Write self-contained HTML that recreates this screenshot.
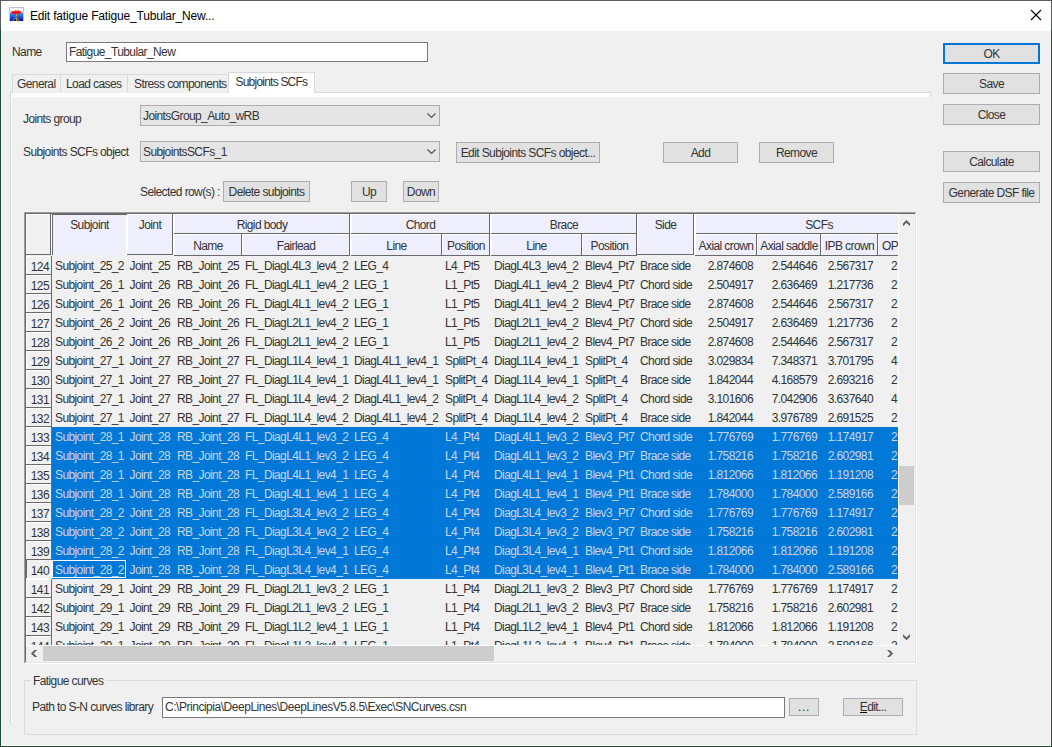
<!DOCTYPE html><html><head><meta charset="utf-8"><style>
*{margin:0;padding:0}
html,body{width:1052px;height:747px;overflow:hidden;background:#f0f0f0}
body{position:relative}
div,span,svg{position:absolute}
.t{white-space:pre;font-family:"Liberation Sans",sans-serif;font-size:12px;letter-spacing:-0.6px;line-height:14px;color:#333}
.w{color:#c8d6e4}
</style></head><body>
<div style="left:0px;top:0px;width:1052px;height:747px;background:#ffffff"></div>
<div style="left:2px;top:31px;width:1048px;height:714px;background:#f0f0f0"></div>
<div style="left:0px;top:0px;width:1052px;height:1px;background:#5b5f62"></div>
<div style="left:0px;top:1px;width:1px;height:29px;background:#555b5e"></div>
<div style="left:1051px;top:1px;width:1px;height:29px;background:#555b5e"></div>
<div style="left:0px;top:30px;width:1px;height:717px;background:#1d4a33"></div>
<div style="left:1051px;top:30px;width:1px;height:717px;background:#1d4a33"></div>
<div style="left:0px;top:746px;width:1052px;height:1px;background:#1d4a33"></div>
<svg style="left:9px;top:7px" width="15" height="15" viewBox="0 0 15 15">
<defs><linearGradient id="g" x1="0" y1="0" x2="0" y2="1"><stop offset="0" stop-color="#4a9aff"/><stop offset="0.5" stop-color="#1f5ae0"/><stop offset="1" stop-color="#0008a8"/></linearGradient></defs>
<rect x="0" y="0" width="15" height="15" fill="#f4f4f8"/>
<rect x="0" y="0" width="15" height="1" fill="#b8bce4"/>
<rect x="0" y="0" width="1" height="14" fill="#c0c4e8"/>
<rect x="14" y="0" width="1" height="14" fill="#c0c4e8"/>
<rect x="1" y="5.5" width="13" height="8.5" fill="url(#g)"/>
<path d="M2 4.3 L6 4.3 L6.5 3.3 L7.3 3.3 L7.5 4.3 L8.5 4.3 L8.7 3.3 L9.5 3.3 L10 4.6 L12.3 4.3 L12 6 L11 6.8 L3.2 6.8 Z" fill="#ff0000"/>
<path d="M7.5 7 L7.5 9 L6.5 10 L7.5 11 L7.5 14 M7.5 11 L10.5 14 M6.5 11 L3.5 14" stroke="#d8b020" stroke-width="0.9" fill="none"/>
</svg>
<span class="t" style="left:30px;top:9px;font-size:12px;letter-spacing:-0.17px;color:#000">Edit fatigue Fatigue_Tubular_New...</span>
<svg style="left:1030px;top:9px" width="12" height="12" viewBox="0 0 12 12"><path d="M1 1 L11 11 M11 1 L1 11" stroke="#000" stroke-width="1.1"/></svg>
<span class="t" style="left:12px;top:45px;">Name</span>
<div style="left:66px;top:42px;width:362px;height:20px;background:#fff;border:1px solid #7a7a7a;box-sizing:border-box"></div>
<span class="t" style="left:69px;top:45px;">Fatigue_Tubular_New</span>
<div style="left:10px;top:92px;width:921px;height:632px;background:#fff;border:1px solid #d9d9d9;box-sizing:border-box"></div>
<div style="left:12px;top:97px;width:1038px;height:648px;background:#f0f0f0"></div>
<div style="left:12px;top:74px;width:217px;height:19px;background:#f0f0f0;border:1px solid #d9d9d9;border-bottom:none;box-sizing:border-box"></div>
<div style="left:60px;top:74px;width:1px;height:18px;background:#d9d9d9"></div>
<div style="left:127px;top:74px;width:1px;height:18px;background:#d9d9d9"></div>
<span class="t" style="left:17px;top:77px;">General</span>
<span class="t" style="left:66px;top:77px;">Load cases</span>
<span class="t" style="left:134px;top:77px;">Stress components</span>
<div style="left:228px;top:72px;width:87px;height:21px;background:#fff;border:1px solid #d9d9d9;border-bottom:none;box-sizing:border-box"></div>
<div style="left:229px;top:92px;width:85px;height:5px;background:#fff"></div>
<span class="t" style="left:235.5px;top:75px;letter-spacing:-0.78px">Subjoints SCFs</span>
<span class="t" style="left:23px;top:112px;">Joints group</span>
<div style="left:140px;top:105px;width:300px;height:21px;background:#e5e5e5;border:1px solid #adadad;box-sizing:border-box"></div>
<span class="t" style="left:143px;top:109px;">JointsGroup_Auto_wRB</span>
<svg style="left:426px;top:112px" width="11" height="8" viewBox="0 0 11 8"><path d="M1.5 1.5 L5.5 5.5 L9.5 1.5" stroke="#555" stroke-width="1.2" fill="none"/></svg>
<span class="t" style="left:23px;top:145px;">Subjoints SCFs object</span>
<div style="left:140px;top:141px;width:300px;height:21px;background:#e5e5e5;border:1px solid #adadad;box-sizing:border-box"></div>
<span class="t" style="left:143px;top:145px;">SubjointsSCFs_1</span>
<svg style="left:426px;top:148px" width="11" height="8" viewBox="0 0 11 8"><path d="M1.5 1.5 L5.5 5.5 L9.5 1.5" stroke="#555" stroke-width="1.2" fill="none"/></svg>
<div style="left:456px;top:142px;width:144px;height:21px;background:#e1e1e1;border:1px solid #adadad;box-sizing:border-box"></div>
<span class="t" style="left:456px;top:146px;width:144px;text-align:center;">Edit Subjoints SCFs object...</span>
<div style="left:663px;top:142px;width:75px;height:21px;background:#e1e1e1;border:1px solid #adadad;box-sizing:border-box"></div>
<span class="t" style="left:663px;top:146px;width:75px;text-align:center;">Add</span>
<div style="left:759px;top:142px;width:75px;height:21px;background:#e1e1e1;border:1px solid #adadad;box-sizing:border-box"></div>
<span class="t" style="left:759px;top:146px;width:75px;text-align:center;">Remove</span>
<span class="t" style="left:140px;top:185px;">Selected row(s) :</span>
<div style="left:223px;top:181px;width:87px;height:21px;background:#e1e1e1;border:1px solid #adadad;box-sizing:border-box"></div>
<span class="t" style="left:223px;top:185px;width:87px;text-align:center;">Delete subjoints</span>
<div style="left:351px;top:181px;width:36px;height:21px;background:#e1e1e1;border:1px solid #adadad;box-sizing:border-box"></div>
<span class="t" style="left:351px;top:185px;width:36px;text-align:center;">Up</span>
<div style="left:403px;top:181px;width:36px;height:21px;background:#e1e1e1;border:1px solid #adadad;box-sizing:border-box"></div>
<span class="t" style="left:403px;top:185px;width:36px;text-align:center;">Down</span>
<div style="left:943px;top:43px;width:97px;height:21px;background:#e1e1e1;border:2px solid #0078d7;box-sizing:border-box"></div>
<span class="t" style="left:943px;top:47px;width:97px;text-align:center;">OK</span>
<div style="left:943px;top:73px;width:97px;height:21px;background:#e1e1e1;border:1px solid #adadad;box-sizing:border-box"></div>
<span class="t" style="left:943px;top:77px;width:97px;text-align:center;">Save</span>
<div style="left:943px;top:104px;width:97px;height:21px;background:#e1e1e1;border:1px solid #adadad;box-sizing:border-box"></div>
<span class="t" style="left:943px;top:108px;width:97px;text-align:center;">Close</span>
<div style="left:943px;top:151px;width:97px;height:21px;background:#e1e1e1;border:1px solid #adadad;box-sizing:border-box"></div>
<span class="t" style="left:943px;top:155px;width:97px;text-align:center;">Calculate</span>
<div style="left:943px;top:182px;width:97px;height:21px;background:#e1e1e1;border:1px solid #adadad;box-sizing:border-box"></div>
<span class="t" style="left:943px;top:186px;width:97px;text-align:center;">Generate DSF file</span>
<div style="left:24px;top:212px;width:893px;height:452px;background:#ffffff"></div>
<div style="left:24px;top:212px;width:892px;height:1px;background:#a0a0a0"></div>
<div style="left:24px;top:212px;width:1px;height:451px;background:#a0a0a0"></div>
<div style="left:25px;top:213px;width:890px;height:1px;background:#696969"></div>
<div style="left:25px;top:213px;width:1px;height:449px;background:#696969"></div>
<div style="left:25px;top:662px;width:891px;height:1px;background:#e3e3e3"></div>
<div style="left:915px;top:213px;width:1px;height:450px;background:#e3e3e3"></div>
<div style="left:26px;top:214px;width:872px;height:431px;overflow:hidden;background:#f0f0f0">
<div style="left:0px;top:0px;width:872px;height:41px;background:#ffffff"></div>
<div style="left:1px;top:1px;width:23px;height:39px;background:#f0f0f0"></div>
<div style="left:24px;top:0px;width:1px;height:41px;background:#696969"></div>
<div style="left:0px;top:40px;width:25px;height:1px;background:#696969"></div>
<div style="left:26px;top:0px;width:1px;height:41px;background:#696969"></div>
<div style="left:26px;top:0px;width:75px;height:1px;background:#696969"></div>
<div style="left:27px;top:1px;width:73px;height:40px;background:#eeeefc"></div>
<span class="t" style="left:27px;top:4px;width:73px;text-align:center;">Subjoint</span>
<div style="left:102px;top:1px;width:44px;height:39px;background:#eeeefc"></div>
<div style="left:146px;top:0px;width:1px;height:41px;background:#696969"></div>
<div style="left:101px;top:40px;width:46px;height:1px;background:#696969"></div>
<span class="t" style="left:102px;top:4px;width:44px;text-align:center;">Joint</span>
<div style="left:149px;top:1px;width:174px;height:18px;background:#eeeefc"></div>
<div style="left:323px;top:0px;width:1px;height:20px;background:#696969"></div>
<div style="left:148px;top:19px;width:176px;height:1px;background:#696969"></div>
<span class="t" style="left:149px;top:4px;width:174px;text-align:center;">Rigid body</span>
<div style="left:149px;top:21px;width:66px;height:20px;background:#eeeefc"></div>
<div style="left:215px;top:20px;width:1px;height:22px;background:#696969"></div>
<div style="left:148px;top:41px;width:68px;height:1px;background:#696969"></div>
<span class="t" style="left:149px;top:25px;width:66px;text-align:center;">Name</span>
<div style="left:217px;top:21px;width:106px;height:20px;background:#eeeefc"></div>
<div style="left:323px;top:20px;width:1px;height:22px;background:#696969"></div>
<div style="left:216px;top:41px;width:108px;height:1px;background:#696969"></div>
<span class="t" style="left:217px;top:25px;width:106px;text-align:center;">Fairlead</span>
<div style="left:326px;top:1px;width:137px;height:18px;background:#eeeefc"></div>
<div style="left:463px;top:0px;width:1px;height:20px;background:#696969"></div>
<div style="left:325px;top:19px;width:139px;height:1px;background:#696969"></div>
<span class="t" style="left:326px;top:4px;width:137px;text-align:center;">Chord</span>
<div style="left:326px;top:21px;width:89px;height:20px;background:#eeeefc"></div>
<div style="left:415px;top:20px;width:1px;height:22px;background:#696969"></div>
<div style="left:325px;top:41px;width:91px;height:1px;background:#696969"></div>
<span class="t" style="left:326px;top:25px;width:89px;text-align:center;">Line</span>
<div style="left:417px;top:21px;width:46px;height:20px;background:#eeeefc"></div>
<div style="left:463px;top:20px;width:1px;height:22px;background:#696969"></div>
<div style="left:416px;top:41px;width:48px;height:1px;background:#696969"></div>
<span class="t" style="left:417px;top:25px;width:46px;text-align:center;">Position</span>
<div style="left:466px;top:1px;width:144px;height:18px;background:#eeeefc"></div>
<div style="left:610px;top:0px;width:1px;height:20px;background:#696969"></div>
<div style="left:465px;top:19px;width:146px;height:1px;background:#696969"></div>
<span class="t" style="left:466px;top:4px;width:144px;text-align:center;">Brace</span>
<div style="left:466px;top:21px;width:89px;height:20px;background:#eeeefc"></div>
<div style="left:555px;top:20px;width:1px;height:22px;background:#696969"></div>
<div style="left:465px;top:41px;width:91px;height:1px;background:#696969"></div>
<span class="t" style="left:466px;top:25px;width:89px;text-align:center;">Line</span>
<div style="left:557px;top:21px;width:53px;height:20px;background:#eeeefc"></div>
<div style="left:610px;top:20px;width:1px;height:22px;background:#696969"></div>
<div style="left:556px;top:41px;width:55px;height:1px;background:#696969"></div>
<span class="t" style="left:557px;top:25px;width:53px;text-align:center;">Position</span>
<div style="left:612px;top:1px;width:55px;height:39px;background:#eeeefc"></div>
<div style="left:667px;top:0px;width:1px;height:41px;background:#696969"></div>
<div style="left:611px;top:40px;width:57px;height:1px;background:#696969"></div>
<span class="t" style="left:612px;top:4px;width:55px;text-align:center;">Side</span>
<div style="left:670px;top:1px;width:202px;height:18px;background:#eeeefc"></div>
<div style="left:670px;top:19px;width:202px;height:1px;background:#696969"></div>
<span class="t" style="left:670px;top:4px;width:246px;text-align:center;">SCFs</span>
<div style="left:670px;top:21px;width:60px;height:20px;background:#eeeefc"></div>
<div style="left:730px;top:20px;width:1px;height:22px;background:#696969"></div>
<div style="left:669px;top:41px;width:62px;height:1px;background:#696969"></div>
<span class="t" style="left:670px;top:25px;width:60px;text-align:center;">Axial crown</span>
<div style="left:732px;top:21px;width:62px;height:20px;background:#eeeefc"></div>
<div style="left:794px;top:20px;width:1px;height:22px;background:#696969"></div>
<div style="left:731px;top:41px;width:64px;height:1px;background:#696969"></div>
<span class="t" style="left:732px;top:25px;width:62px;text-align:center;">Axial saddle</span>
<div style="left:796px;top:21px;width:55px;height:20px;background:#eeeefc"></div>
<div style="left:851px;top:20px;width:1px;height:22px;background:#696969"></div>
<div style="left:795px;top:41px;width:57px;height:1px;background:#696969"></div>
<span class="t" style="left:796px;top:25px;width:55px;text-align:center;">IPB crown</span>
<div style="left:853px;top:21px;width:19px;height:20px;background:#eeeefc"></div>
<div style="left:852px;top:41px;width:20px;height:1px;background:#696969"></div>
<span class="t" style="left:856px;top:25px;">OP</span>
<div style="left:0px;top:42px;width:25px;height:18px;background:#ffffff"></div>
<div style="left:1px;top:43px;width:24px;height:17px;background:#f0f0f0"></div>
<div style="left:25px;top:42px;width:1px;height:19px;background:#696969"></div>
<div style="left:0px;top:60px;width:26px;height:1px;background:#696969"></div>
<span class="t" style="left:-177px;top:46px;width:200px;text-align:right;">124</span>
<span class="t" style="left:29px;top:45px;">Subjoint_25_2</span>
<span class="t" style="left:103.5px;top:45px;">Joint_25</span>
<span class="t" style="left:151px;top:45px;">RB_Joint_25</span>
<span class="t" style="left:219px;top:45px;">FL_DiagL4L3_lev4_2</span>
<span class="t" style="left:328px;top:45px;">LEG_4</span>
<span class="t" style="left:419px;top:45px;">L4_Pt5</span>
<span class="t" style="left:468px;top:45px;">DiagL4L3_lev4_2</span>
<span class="t" style="left:559px;top:45px;">Blev4_Pt7</span>
<span class="t" style="left:614px;top:45px;">Brace side</span>
<span class="t" style="left:527px;top:45px;width:200px;text-align:right;">2.874608</span>
<span class="t" style="left:591px;top:45px;width:200px;text-align:right;">2.544646</span>
<span class="t" style="left:647px;top:45px;width:200px;text-align:right;">2.567317</span>
<span class="t" style="left:865px;top:45px;">2</span>
<div style="left:0px;top:61px;width:25px;height:18px;background:#ffffff"></div>
<div style="left:1px;top:62px;width:24px;height:17px;background:#f0f0f0"></div>
<div style="left:25px;top:61px;width:1px;height:19px;background:#696969"></div>
<div style="left:0px;top:79px;width:26px;height:1px;background:#696969"></div>
<span class="t" style="left:-177px;top:65px;width:200px;text-align:right;">125</span>
<span class="t" style="left:29px;top:64px;">Subjoint_26_1</span>
<span class="t" style="left:103.5px;top:64px;">Joint_26</span>
<span class="t" style="left:151px;top:64px;">RB_Joint_26</span>
<span class="t" style="left:219px;top:64px;">FL_DiagL4L1_lev4_2</span>
<span class="t" style="left:328px;top:64px;">LEG_1</span>
<span class="t" style="left:419px;top:64px;">L1_Pt5</span>
<span class="t" style="left:468px;top:64px;">DiagL4L1_lev4_2</span>
<span class="t" style="left:559px;top:64px;">Blev4_Pt7</span>
<span class="t" style="left:614px;top:64px;">Chord side</span>
<span class="t" style="left:527px;top:64px;width:200px;text-align:right;">2.504917</span>
<span class="t" style="left:591px;top:64px;width:200px;text-align:right;">2.636469</span>
<span class="t" style="left:647px;top:64px;width:200px;text-align:right;">1.217736</span>
<span class="t" style="left:865px;top:64px;">2</span>
<div style="left:0px;top:80px;width:25px;height:18px;background:#ffffff"></div>
<div style="left:1px;top:81px;width:24px;height:17px;background:#f0f0f0"></div>
<div style="left:25px;top:80px;width:1px;height:19px;background:#696969"></div>
<div style="left:0px;top:98px;width:26px;height:1px;background:#696969"></div>
<span class="t" style="left:-177px;top:84px;width:200px;text-align:right;">126</span>
<span class="t" style="left:29px;top:83px;">Subjoint_26_1</span>
<span class="t" style="left:103.5px;top:83px;">Joint_26</span>
<span class="t" style="left:151px;top:83px;">RB_Joint_26</span>
<span class="t" style="left:219px;top:83px;">FL_DiagL4L1_lev4_2</span>
<span class="t" style="left:328px;top:83px;">LEG_1</span>
<span class="t" style="left:419px;top:83px;">L1_Pt5</span>
<span class="t" style="left:468px;top:83px;">DiagL4L1_lev4_2</span>
<span class="t" style="left:559px;top:83px;">Blev4_Pt7</span>
<span class="t" style="left:614px;top:83px;">Brace side</span>
<span class="t" style="left:527px;top:83px;width:200px;text-align:right;">2.874608</span>
<span class="t" style="left:591px;top:83px;width:200px;text-align:right;">2.544646</span>
<span class="t" style="left:647px;top:83px;width:200px;text-align:right;">2.567317</span>
<span class="t" style="left:865px;top:83px;">2</span>
<div style="left:0px;top:99px;width:25px;height:18px;background:#ffffff"></div>
<div style="left:1px;top:100px;width:24px;height:17px;background:#f0f0f0"></div>
<div style="left:25px;top:99px;width:1px;height:19px;background:#696969"></div>
<div style="left:0px;top:117px;width:26px;height:1px;background:#696969"></div>
<span class="t" style="left:-177px;top:103px;width:200px;text-align:right;">127</span>
<span class="t" style="left:29px;top:102px;">Subjoint_26_2</span>
<span class="t" style="left:103.5px;top:102px;">Joint_26</span>
<span class="t" style="left:151px;top:102px;">RB_Joint_26</span>
<span class="t" style="left:219px;top:102px;">FL_DiagL2L1_lev4_2</span>
<span class="t" style="left:328px;top:102px;">LEG_1</span>
<span class="t" style="left:419px;top:102px;">L1_Pt5</span>
<span class="t" style="left:468px;top:102px;">DiagL2L1_lev4_2</span>
<span class="t" style="left:559px;top:102px;">Blev4_Pt7</span>
<span class="t" style="left:614px;top:102px;">Chord side</span>
<span class="t" style="left:527px;top:102px;width:200px;text-align:right;">2.504917</span>
<span class="t" style="left:591px;top:102px;width:200px;text-align:right;">2.636469</span>
<span class="t" style="left:647px;top:102px;width:200px;text-align:right;">1.217736</span>
<span class="t" style="left:865px;top:102px;">2</span>
<div style="left:0px;top:118px;width:25px;height:18px;background:#ffffff"></div>
<div style="left:1px;top:119px;width:24px;height:17px;background:#f0f0f0"></div>
<div style="left:25px;top:118px;width:1px;height:19px;background:#696969"></div>
<div style="left:0px;top:136px;width:26px;height:1px;background:#696969"></div>
<span class="t" style="left:-177px;top:122px;width:200px;text-align:right;">128</span>
<span class="t" style="left:29px;top:121px;">Subjoint_26_2</span>
<span class="t" style="left:103.5px;top:121px;">Joint_26</span>
<span class="t" style="left:151px;top:121px;">RB_Joint_26</span>
<span class="t" style="left:219px;top:121px;">FL_DiagL2L1_lev4_2</span>
<span class="t" style="left:328px;top:121px;">LEG_1</span>
<span class="t" style="left:419px;top:121px;">L1_Pt5</span>
<span class="t" style="left:468px;top:121px;">DiagL2L1_lev4_2</span>
<span class="t" style="left:559px;top:121px;">Blev4_Pt7</span>
<span class="t" style="left:614px;top:121px;">Brace side</span>
<span class="t" style="left:527px;top:121px;width:200px;text-align:right;">2.874608</span>
<span class="t" style="left:591px;top:121px;width:200px;text-align:right;">2.544646</span>
<span class="t" style="left:647px;top:121px;width:200px;text-align:right;">2.567317</span>
<span class="t" style="left:865px;top:121px;">2</span>
<div style="left:0px;top:137px;width:25px;height:18px;background:#ffffff"></div>
<div style="left:1px;top:138px;width:24px;height:17px;background:#f0f0f0"></div>
<div style="left:25px;top:137px;width:1px;height:19px;background:#696969"></div>
<div style="left:0px;top:155px;width:26px;height:1px;background:#696969"></div>
<span class="t" style="left:-177px;top:141px;width:200px;text-align:right;">129</span>
<span class="t" style="left:29px;top:140px;">Subjoint_27_1</span>
<span class="t" style="left:103.5px;top:140px;">Joint_27</span>
<span class="t" style="left:151px;top:140px;">RB_Joint_27</span>
<span class="t" style="left:219px;top:140px;">FL_DiagL1L4_lev4_1</span>
<span class="t" style="left:328px;top:140px;">DiagL4L1_lev4_1</span>
<span class="t" style="left:419px;top:140px;">SplitPt_4</span>
<span class="t" style="left:468px;top:140px;">DiagL1L4_lev4_1</span>
<span class="t" style="left:559px;top:140px;">SplitPt_4</span>
<span class="t" style="left:614px;top:140px;">Chord side</span>
<span class="t" style="left:527px;top:140px;width:200px;text-align:right;">3.029834</span>
<span class="t" style="left:591px;top:140px;width:200px;text-align:right;">7.348371</span>
<span class="t" style="left:647px;top:140px;width:200px;text-align:right;">3.701795</span>
<span class="t" style="left:865px;top:140px;">4</span>
<div style="left:0px;top:156px;width:25px;height:18px;background:#ffffff"></div>
<div style="left:1px;top:157px;width:24px;height:17px;background:#f0f0f0"></div>
<div style="left:25px;top:156px;width:1px;height:19px;background:#696969"></div>
<div style="left:0px;top:174px;width:26px;height:1px;background:#696969"></div>
<span class="t" style="left:-177px;top:160px;width:200px;text-align:right;">130</span>
<span class="t" style="left:29px;top:159px;">Subjoint_27_1</span>
<span class="t" style="left:103.5px;top:159px;">Joint_27</span>
<span class="t" style="left:151px;top:159px;">RB_Joint_27</span>
<span class="t" style="left:219px;top:159px;">FL_DiagL1L4_lev4_1</span>
<span class="t" style="left:328px;top:159px;">DiagL4L1_lev4_1</span>
<span class="t" style="left:419px;top:159px;">SplitPt_4</span>
<span class="t" style="left:468px;top:159px;">DiagL1L4_lev4_1</span>
<span class="t" style="left:559px;top:159px;">SplitPt_4</span>
<span class="t" style="left:614px;top:159px;">Brace side</span>
<span class="t" style="left:527px;top:159px;width:200px;text-align:right;">1.842044</span>
<span class="t" style="left:591px;top:159px;width:200px;text-align:right;">4.168579</span>
<span class="t" style="left:647px;top:159px;width:200px;text-align:right;">2.693216</span>
<span class="t" style="left:865px;top:159px;">2</span>
<div style="left:0px;top:175px;width:25px;height:18px;background:#ffffff"></div>
<div style="left:1px;top:176px;width:24px;height:17px;background:#f0f0f0"></div>
<div style="left:25px;top:175px;width:1px;height:19px;background:#696969"></div>
<div style="left:0px;top:193px;width:26px;height:1px;background:#696969"></div>
<span class="t" style="left:-177px;top:179px;width:200px;text-align:right;">131</span>
<span class="t" style="left:29px;top:178px;">Subjoint_27_1</span>
<span class="t" style="left:103.5px;top:178px;">Joint_27</span>
<span class="t" style="left:151px;top:178px;">RB_Joint_27</span>
<span class="t" style="left:219px;top:178px;">FL_DiagL1L4_lev4_2</span>
<span class="t" style="left:328px;top:178px;">DiagL4L1_lev4_2</span>
<span class="t" style="left:419px;top:178px;">SplitPt_4</span>
<span class="t" style="left:468px;top:178px;">DiagL1L4_lev4_2</span>
<span class="t" style="left:559px;top:178px;">SplitPt_4</span>
<span class="t" style="left:614px;top:178px;">Chord side</span>
<span class="t" style="left:527px;top:178px;width:200px;text-align:right;">3.101606</span>
<span class="t" style="left:591px;top:178px;width:200px;text-align:right;">7.042906</span>
<span class="t" style="left:647px;top:178px;width:200px;text-align:right;">3.637640</span>
<span class="t" style="left:865px;top:178px;">4</span>
<div style="left:0px;top:194px;width:25px;height:18px;background:#ffffff"></div>
<div style="left:1px;top:195px;width:24px;height:17px;background:#f0f0f0"></div>
<div style="left:25px;top:194px;width:1px;height:19px;background:#696969"></div>
<div style="left:0px;top:212px;width:26px;height:1px;background:#696969"></div>
<span class="t" style="left:-177px;top:198px;width:200px;text-align:right;">132</span>
<span class="t" style="left:29px;top:197px;">Subjoint_27_1</span>
<span class="t" style="left:103.5px;top:197px;">Joint_27</span>
<span class="t" style="left:151px;top:197px;">RB_Joint_27</span>
<span class="t" style="left:219px;top:197px;">FL_DiagL1L4_lev4_2</span>
<span class="t" style="left:328px;top:197px;">DiagL4L1_lev4_2</span>
<span class="t" style="left:419px;top:197px;">SplitPt_4</span>
<span class="t" style="left:468px;top:197px;">DiagL1L4_lev4_2</span>
<span class="t" style="left:559px;top:197px;">SplitPt_4</span>
<span class="t" style="left:614px;top:197px;">Brace side</span>
<span class="t" style="left:527px;top:197px;width:200px;text-align:right;">1.842044</span>
<span class="t" style="left:591px;top:197px;width:200px;text-align:right;">3.976789</span>
<span class="t" style="left:647px;top:197px;width:200px;text-align:right;">2.691525</span>
<span class="t" style="left:865px;top:197px;">2</span>
<div style="left:0px;top:213px;width:25px;height:18px;background:#ffffff"></div>
<div style="left:1px;top:214px;width:24px;height:17px;background:#f0f0f0"></div>
<div style="left:25px;top:213px;width:1px;height:19px;background:#696969"></div>
<div style="left:0px;top:231px;width:26px;height:1px;background:#696969"></div>
<span class="t" style="left:-177px;top:217px;width:200px;text-align:right;">133</span>
<div style="left:26px;top:213px;width:846px;height:19px;background:#0078d7"></div>
<span class="t w" style="left:29px;top:216px;">Subjoint_28_1</span>
<span class="t w" style="left:103.5px;top:216px;">Joint_28</span>
<span class="t w" style="left:151px;top:216px;">RB_Joint_28</span>
<span class="t w" style="left:219px;top:216px;">FL_DiagL4L1_lev3_2</span>
<span class="t w" style="left:328px;top:216px;">LEG_4</span>
<span class="t w" style="left:419px;top:216px;">L4_Pt4</span>
<span class="t w" style="left:468px;top:216px;">DiagL4L1_lev3_2</span>
<span class="t w" style="left:559px;top:216px;">Blev3_Pt7</span>
<span class="t w" style="left:614px;top:216px;">Chord side</span>
<span class="t w" style="left:527px;top:216px;width:200px;text-align:right;">1.776769</span>
<span class="t w" style="left:591px;top:216px;width:200px;text-align:right;">1.776769</span>
<span class="t w" style="left:647px;top:216px;width:200px;text-align:right;">1.174917</span>
<span class="t w" style="left:865px;top:216px;">2</span>
<div style="left:0px;top:232px;width:25px;height:18px;background:#ffffff"></div>
<div style="left:1px;top:233px;width:24px;height:17px;background:#f0f0f0"></div>
<div style="left:25px;top:232px;width:1px;height:19px;background:#696969"></div>
<div style="left:0px;top:250px;width:26px;height:1px;background:#696969"></div>
<span class="t" style="left:-177px;top:236px;width:200px;text-align:right;">134</span>
<div style="left:26px;top:232px;width:846px;height:19px;background:#0078d7"></div>
<span class="t w" style="left:29px;top:235px;">Subjoint_28_1</span>
<span class="t w" style="left:103.5px;top:235px;">Joint_28</span>
<span class="t w" style="left:151px;top:235px;">RB_Joint_28</span>
<span class="t w" style="left:219px;top:235px;">FL_DiagL4L1_lev3_2</span>
<span class="t w" style="left:328px;top:235px;">LEG_4</span>
<span class="t w" style="left:419px;top:235px;">L4_Pt4</span>
<span class="t w" style="left:468px;top:235px;">DiagL4L1_lev3_2</span>
<span class="t w" style="left:559px;top:235px;">Blev3_Pt7</span>
<span class="t w" style="left:614px;top:235px;">Brace side</span>
<span class="t w" style="left:527px;top:235px;width:200px;text-align:right;">1.758216</span>
<span class="t w" style="left:591px;top:235px;width:200px;text-align:right;">1.758216</span>
<span class="t w" style="left:647px;top:235px;width:200px;text-align:right;">2.602981</span>
<span class="t w" style="left:865px;top:235px;">2</span>
<div style="left:0px;top:251px;width:25px;height:18px;background:#ffffff"></div>
<div style="left:1px;top:252px;width:24px;height:17px;background:#f0f0f0"></div>
<div style="left:25px;top:251px;width:1px;height:19px;background:#696969"></div>
<div style="left:0px;top:269px;width:26px;height:1px;background:#696969"></div>
<span class="t" style="left:-177px;top:255px;width:200px;text-align:right;">135</span>
<div style="left:26px;top:251px;width:846px;height:19px;background:#0078d7"></div>
<span class="t w" style="left:29px;top:254px;">Subjoint_28_1</span>
<span class="t w" style="left:103.5px;top:254px;">Joint_28</span>
<span class="t w" style="left:151px;top:254px;">RB_Joint_28</span>
<span class="t w" style="left:219px;top:254px;">FL_DiagL4L1_lev4_1</span>
<span class="t w" style="left:328px;top:254px;">LEG_4</span>
<span class="t w" style="left:419px;top:254px;">L4_Pt4</span>
<span class="t w" style="left:468px;top:254px;">DiagL4L1_lev4_1</span>
<span class="t w" style="left:559px;top:254px;">Blev4_Pt1</span>
<span class="t w" style="left:614px;top:254px;">Chord side</span>
<span class="t w" style="left:527px;top:254px;width:200px;text-align:right;">1.812066</span>
<span class="t w" style="left:591px;top:254px;width:200px;text-align:right;">1.812066</span>
<span class="t w" style="left:647px;top:254px;width:200px;text-align:right;">1.191208</span>
<span class="t w" style="left:865px;top:254px;">2</span>
<div style="left:0px;top:270px;width:25px;height:18px;background:#ffffff"></div>
<div style="left:1px;top:271px;width:24px;height:17px;background:#f0f0f0"></div>
<div style="left:25px;top:270px;width:1px;height:19px;background:#696969"></div>
<div style="left:0px;top:288px;width:26px;height:1px;background:#696969"></div>
<span class="t" style="left:-177px;top:274px;width:200px;text-align:right;">136</span>
<div style="left:26px;top:270px;width:846px;height:19px;background:#0078d7"></div>
<span class="t w" style="left:29px;top:273px;">Subjoint_28_1</span>
<span class="t w" style="left:103.5px;top:273px;">Joint_28</span>
<span class="t w" style="left:151px;top:273px;">RB_Joint_28</span>
<span class="t w" style="left:219px;top:273px;">FL_DiagL4L1_lev4_1</span>
<span class="t w" style="left:328px;top:273px;">LEG_4</span>
<span class="t w" style="left:419px;top:273px;">L4_Pt4</span>
<span class="t w" style="left:468px;top:273px;">DiagL4L1_lev4_1</span>
<span class="t w" style="left:559px;top:273px;">Blev4_Pt1</span>
<span class="t w" style="left:614px;top:273px;">Brace side</span>
<span class="t w" style="left:527px;top:273px;width:200px;text-align:right;">1.784000</span>
<span class="t w" style="left:591px;top:273px;width:200px;text-align:right;">1.784000</span>
<span class="t w" style="left:647px;top:273px;width:200px;text-align:right;">2.589166</span>
<span class="t w" style="left:865px;top:273px;">2</span>
<div style="left:0px;top:289px;width:25px;height:18px;background:#ffffff"></div>
<div style="left:1px;top:290px;width:24px;height:17px;background:#f0f0f0"></div>
<div style="left:25px;top:289px;width:1px;height:19px;background:#696969"></div>
<div style="left:0px;top:307px;width:26px;height:1px;background:#696969"></div>
<span class="t" style="left:-177px;top:293px;width:200px;text-align:right;">137</span>
<div style="left:26px;top:289px;width:846px;height:19px;background:#0078d7"></div>
<span class="t w" style="left:29px;top:292px;">Subjoint_28_2</span>
<span class="t w" style="left:103.5px;top:292px;">Joint_28</span>
<span class="t w" style="left:151px;top:292px;">RB_Joint_28</span>
<span class="t w" style="left:219px;top:292px;">FL_DiagL3L4_lev3_2</span>
<span class="t w" style="left:328px;top:292px;">LEG_4</span>
<span class="t w" style="left:419px;top:292px;">L4_Pt4</span>
<span class="t w" style="left:468px;top:292px;">DiagL3L4_lev3_2</span>
<span class="t w" style="left:559px;top:292px;">Blev3_Pt7</span>
<span class="t w" style="left:614px;top:292px;">Chord side</span>
<span class="t w" style="left:527px;top:292px;width:200px;text-align:right;">1.776769</span>
<span class="t w" style="left:591px;top:292px;width:200px;text-align:right;">1.776769</span>
<span class="t w" style="left:647px;top:292px;width:200px;text-align:right;">1.174917</span>
<span class="t w" style="left:865px;top:292px;">2</span>
<div style="left:0px;top:308px;width:25px;height:18px;background:#ffffff"></div>
<div style="left:1px;top:309px;width:24px;height:17px;background:#f0f0f0"></div>
<div style="left:25px;top:308px;width:1px;height:19px;background:#696969"></div>
<div style="left:0px;top:326px;width:26px;height:1px;background:#696969"></div>
<span class="t" style="left:-177px;top:312px;width:200px;text-align:right;">138</span>
<div style="left:26px;top:308px;width:846px;height:19px;background:#0078d7"></div>
<span class="t w" style="left:29px;top:311px;">Subjoint_28_2</span>
<span class="t w" style="left:103.5px;top:311px;">Joint_28</span>
<span class="t w" style="left:151px;top:311px;">RB_Joint_28</span>
<span class="t w" style="left:219px;top:311px;">FL_DiagL3L4_lev3_2</span>
<span class="t w" style="left:328px;top:311px;">LEG_4</span>
<span class="t w" style="left:419px;top:311px;">L4_Pt4</span>
<span class="t w" style="left:468px;top:311px;">DiagL3L4_lev3_2</span>
<span class="t w" style="left:559px;top:311px;">Blev3_Pt7</span>
<span class="t w" style="left:614px;top:311px;">Brace side</span>
<span class="t w" style="left:527px;top:311px;width:200px;text-align:right;">1.758216</span>
<span class="t w" style="left:591px;top:311px;width:200px;text-align:right;">1.758216</span>
<span class="t w" style="left:647px;top:311px;width:200px;text-align:right;">2.602981</span>
<span class="t w" style="left:865px;top:311px;">2</span>
<div style="left:0px;top:327px;width:25px;height:18px;background:#ffffff"></div>
<div style="left:1px;top:328px;width:24px;height:17px;background:#f0f0f0"></div>
<div style="left:25px;top:327px;width:1px;height:19px;background:#696969"></div>
<div style="left:0px;top:345px;width:26px;height:1px;background:#696969"></div>
<span class="t" style="left:-177px;top:331px;width:200px;text-align:right;">139</span>
<div style="left:26px;top:327px;width:846px;height:19px;background:#0078d7"></div>
<span class="t w" style="left:29px;top:330px;">Subjoint_28_2</span>
<span class="t w" style="left:103.5px;top:330px;">Joint_28</span>
<span class="t w" style="left:151px;top:330px;">RB_Joint_28</span>
<span class="t w" style="left:219px;top:330px;">FL_DiagL3L4_lev4_1</span>
<span class="t w" style="left:328px;top:330px;">LEG_4</span>
<span class="t w" style="left:419px;top:330px;">L4_Pt4</span>
<span class="t w" style="left:468px;top:330px;">DiagL3L4_lev4_1</span>
<span class="t w" style="left:559px;top:330px;">Blev4_Pt1</span>
<span class="t w" style="left:614px;top:330px;">Chord side</span>
<span class="t w" style="left:527px;top:330px;width:200px;text-align:right;">1.812066</span>
<span class="t w" style="left:591px;top:330px;width:200px;text-align:right;">1.812066</span>
<span class="t w" style="left:647px;top:330px;width:200px;text-align:right;">1.191208</span>
<span class="t w" style="left:865px;top:330px;">2</span>
<div style="left:0px;top:346px;width:26px;height:19px;background:#ffffff"></div>
<div style="left:1px;top:346px;width:24px;height:18px;background:#f0f0f0"></div>
<div style="left:0px;top:346px;width:1px;height:18px;background:#696969"></div>
<span class="t" style="left:-177px;top:350px;width:200px;text-align:right;">140</span>
<div style="left:26px;top:346px;width:846px;height:19px;background:#0078d7"></div>
<span class="t w" style="left:29px;top:349px;">Subjoint_28_2</span>
<span class="t w" style="left:103.5px;top:349px;">Joint_28</span>
<span class="t w" style="left:151px;top:349px;">RB_Joint_28</span>
<span class="t w" style="left:219px;top:349px;">FL_DiagL3L4_lev4_1</span>
<span class="t w" style="left:328px;top:349px;">LEG_4</span>
<span class="t w" style="left:419px;top:349px;">L4_Pt4</span>
<span class="t w" style="left:468px;top:349px;">DiagL3L4_lev4_1</span>
<span class="t w" style="left:559px;top:349px;">Blev4_Pt1</span>
<span class="t w" style="left:614px;top:349px;">Brace side</span>
<span class="t w" style="left:527px;top:349px;width:200px;text-align:right;">1.784000</span>
<span class="t w" style="left:591px;top:349px;width:200px;text-align:right;">1.784000</span>
<span class="t w" style="left:647px;top:349px;width:200px;text-align:right;">2.589166</span>
<span class="t w" style="left:865px;top:349px;">2</span>
<div style="left:26px;top:346px;width:74px;height:18px;border:1px solid #ffffff;box-sizing:border-box"></div>
<div style="left:0px;top:365px;width:25px;height:18px;background:#ffffff"></div>
<div style="left:1px;top:366px;width:24px;height:17px;background:#f0f0f0"></div>
<div style="left:25px;top:365px;width:1px;height:19px;background:#696969"></div>
<div style="left:0px;top:383px;width:26px;height:1px;background:#696969"></div>
<span class="t" style="left:-177px;top:369px;width:200px;text-align:right;">141</span>
<span class="t" style="left:29px;top:368px;">Subjoint_29_1</span>
<span class="t" style="left:103.5px;top:368px;">Joint_29</span>
<span class="t" style="left:151px;top:368px;">RB_Joint_29</span>
<span class="t" style="left:219px;top:368px;">FL_DiagL2L1_lev3_2</span>
<span class="t" style="left:328px;top:368px;">LEG_1</span>
<span class="t" style="left:419px;top:368px;">L1_Pt4</span>
<span class="t" style="left:468px;top:368px;">DiagL2L1_lev3_2</span>
<span class="t" style="left:559px;top:368px;">Blev3_Pt7</span>
<span class="t" style="left:614px;top:368px;">Chord side</span>
<span class="t" style="left:527px;top:368px;width:200px;text-align:right;">1.776769</span>
<span class="t" style="left:591px;top:368px;width:200px;text-align:right;">1.776769</span>
<span class="t" style="left:647px;top:368px;width:200px;text-align:right;">1.174917</span>
<span class="t" style="left:865px;top:368px;">2</span>
<div style="left:0px;top:384px;width:25px;height:18px;background:#ffffff"></div>
<div style="left:1px;top:385px;width:24px;height:17px;background:#f0f0f0"></div>
<div style="left:25px;top:384px;width:1px;height:19px;background:#696969"></div>
<div style="left:0px;top:402px;width:26px;height:1px;background:#696969"></div>
<span class="t" style="left:-177px;top:388px;width:200px;text-align:right;">142</span>
<span class="t" style="left:29px;top:387px;">Subjoint_29_1</span>
<span class="t" style="left:103.5px;top:387px;">Joint_29</span>
<span class="t" style="left:151px;top:387px;">RB_Joint_29</span>
<span class="t" style="left:219px;top:387px;">FL_DiagL2L1_lev3_2</span>
<span class="t" style="left:328px;top:387px;">LEG_1</span>
<span class="t" style="left:419px;top:387px;">L1_Pt4</span>
<span class="t" style="left:468px;top:387px;">DiagL2L1_lev3_2</span>
<span class="t" style="left:559px;top:387px;">Blev3_Pt7</span>
<span class="t" style="left:614px;top:387px;">Brace side</span>
<span class="t" style="left:527px;top:387px;width:200px;text-align:right;">1.758216</span>
<span class="t" style="left:591px;top:387px;width:200px;text-align:right;">1.758216</span>
<span class="t" style="left:647px;top:387px;width:200px;text-align:right;">2.602981</span>
<span class="t" style="left:865px;top:387px;">2</span>
<div style="left:0px;top:403px;width:25px;height:18px;background:#ffffff"></div>
<div style="left:1px;top:404px;width:24px;height:17px;background:#f0f0f0"></div>
<div style="left:25px;top:403px;width:1px;height:19px;background:#696969"></div>
<div style="left:0px;top:421px;width:26px;height:1px;background:#696969"></div>
<span class="t" style="left:-177px;top:407px;width:200px;text-align:right;">143</span>
<span class="t" style="left:29px;top:406px;">Subjoint_29_1</span>
<span class="t" style="left:103.5px;top:406px;">Joint_29</span>
<span class="t" style="left:151px;top:406px;">RB_Joint_29</span>
<span class="t" style="left:219px;top:406px;">FL_DiagL1L2_lev4_1</span>
<span class="t" style="left:328px;top:406px;">LEG_1</span>
<span class="t" style="left:419px;top:406px;">L1_Pt4</span>
<span class="t" style="left:468px;top:406px;">DiagL1L2_lev4_1</span>
<span class="t" style="left:559px;top:406px;">Blev4_Pt1</span>
<span class="t" style="left:614px;top:406px;">Chord side</span>
<span class="t" style="left:527px;top:406px;width:200px;text-align:right;">1.812066</span>
<span class="t" style="left:591px;top:406px;width:200px;text-align:right;">1.812066</span>
<span class="t" style="left:647px;top:406px;width:200px;text-align:right;">1.191208</span>
<span class="t" style="left:865px;top:406px;">2</span>
<div style="left:0px;top:422px;width:25px;height:18px;background:#ffffff"></div>
<div style="left:1px;top:423px;width:24px;height:17px;background:#f0f0f0"></div>
<div style="left:25px;top:422px;width:1px;height:19px;background:#696969"></div>
<div style="left:0px;top:440px;width:26px;height:1px;background:#696969"></div>
<span class="t" style="left:-177px;top:426px;width:200px;text-align:right;">144</span>
<span class="t" style="left:29px;top:425px;">Subjoint_29_1</span>
<span class="t" style="left:103.5px;top:425px;">Joint_29</span>
<span class="t" style="left:151px;top:425px;">RB_Joint_29</span>
<span class="t" style="left:219px;top:425px;">FL_DiagL1L2_lev4_1</span>
<span class="t" style="left:328px;top:425px;">LEG_1</span>
<span class="t" style="left:419px;top:425px;">L1_Pt4</span>
<span class="t" style="left:468px;top:425px;">DiagL1L2_lev4_1</span>
<span class="t" style="left:559px;top:425px;">Blev4_Pt1</span>
<span class="t" style="left:614px;top:425px;">Brace side</span>
<span class="t" style="left:527px;top:425px;width:200px;text-align:right;">1.784000</span>
<span class="t" style="left:591px;top:425px;width:200px;text-align:right;">1.784000</span>
<span class="t" style="left:647px;top:425px;width:200px;text-align:right;">2.589166</span>
<span class="t" style="left:865px;top:425px;">2</span>
</div>
<div style="left:898px;top:214px;width:1px;height:432px;background:#ffffff"></div>
<div style="left:26px;top:645px;width:873px;height:1px;background:#ffffff"></div>
<div style="left:899px;top:214px;width:16px;height:448px;background:#f0f0f0"></div>
<svg style="left:903px;top:220px" width="8" height="7" viewBox="0 0 8 7"><path d="M0 3.5 L3.5 0 L7 3.5 L7 6.2 L3.5 2.7 L0 6.2 Z" fill="#606060"/></svg>
<svg style="left:903px;top:634px" width="8" height="7" viewBox="0 0 8 7"><path d="M0 0 L3.5 3.5 L7 0 L7 2.7 L3.5 6.2 L0 2.7 Z" fill="#606060"/></svg>
<div style="left:899px;top:466px;width:15px;height:39px;background:#cdcdcd"></div>
<div style="left:26px;top:646px;width:873px;height:16px;background:#f0f0f0"></div>
<svg style="left:31px;top:650px" width="7" height="8" viewBox="0 0 7 8"><path d="M3.5 0 L0 3.5 L3.5 7 L6.2 7 L2.7 3.5 L6.2 0 Z" fill="#606060"/></svg>
<svg style="left:887px;top:650px" width="7" height="8" viewBox="0 0 7 8"><path d="M0 0 L3.5 3.5 L0 7 L2.7 7 L6.2 3.5 L2.7 0 Z" fill="#606060"/></svg>
<div style="left:43px;top:646px;width:451px;height:15px;background:#cdcdcd"></div>
<div style="left:24px;top:680px;width:893px;height:55px;border:1px solid #dcdcdc;box-sizing:border-box"></div>
<div style="left:31px;top:674px;width:75px;height:15px;background:#f0f0f0"></div>
<span class="t" style="left:33px;top:674px;">Fatigue curves</span>
<span class="t" style="left:32px;top:700px;">Path to S-N curves library</span>
<div style="left:162px;top:697px;width:623px;height:21px;background:#fff;border:1px solid #7a7a7a;box-sizing:border-box"></div>
<span class="t" style="left:165px;top:700px;letter-spacing:-0.47px">C:\Principia\DeepLines\DeepLinesV5.8.5\Exec\SNCurves.csn</span>
<div style="left:789px;top:698px;width:30px;height:18px;background:#e1e1e1;border:1px solid #adadad;box-sizing:border-box"></div>
<span class="t" style="left:789px;top:700px;width:30px;text-align:center;letter-spacing:0.6px">...</span>
<div style="left:843px;top:698px;width:60px;height:18px;background:#e1e1e1;border:1px solid #adadad;box-sizing:border-box"></div>
<span class="t" style="left:843px;top:700px;width:60px;text-align:center;">Edit...</span>
<div style="left:860px;top:712px;width:7px;height:1px;background:#000"></div>
</body></html>
